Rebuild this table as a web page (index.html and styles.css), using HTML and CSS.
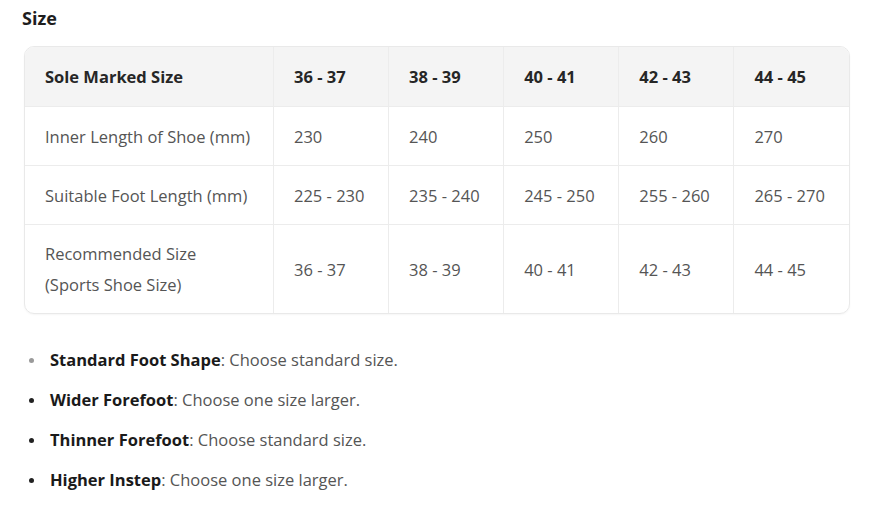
FILE: index.html
```html
<!DOCTYPE html>
<html>
<head>
<meta charset="utf-8">
<link rel="stylesheet" href="styles.css">
</head>
<body>
<div class="page">
  <h2 class="title">Size</h2>
  <div class="table-wrap">
    <table class="size-table">
      <thead>
        <tr>
          <th class="first">Sole Marked Size</th>
          <th>36 - 37</th>
          <th>38 - 39</th>
          <th>40 - 41</th>
          <th>42 - 43</th>
          <th>44 - 45</th>
        </tr>
      </thead>
      <tbody>
        <tr>
          <td class="first">Inner Length of Shoe (mm)</td>
          <td>230</td><td>240</td><td>250</td><td>260</td><td>270</td>
        </tr>
        <tr>
          <td class="first">Suitable Foot Length (mm)</td>
          <td>225 - 230</td><td>235 - 240</td><td>245 - 250</td><td>255 - 260</td><td>265 - 270</td>
        </tr>
        <tr class="tall">
          <td class="first">Recommended Size<br>(Sports Shoe Size)</td>
          <td>36 - 37</td><td>38 - 39</td><td>40 - 41</td><td>42 - 43</td><td>44 - 45</td>
        </tr>
      </tbody>
    </table>
  </div>
  <ul class="tips">
    <li class="faint"><b>Standard Foot Shape</b>: Choose standard size.</li>
    <li><b>Wider Forefoot</b>: Choose one size larger.</li>
    <li><b>Thinner Forefoot</b>: Choose standard size.</li>
    <li><b>Higher Instep</b>: Choose one size larger.</li>
  </ul>
</div>
</body>
</html>
```

FILE: styles.css
```css
html, body {
  margin: 0;
  padding: 0;
  background: #ffffff;
}
.page {
  font-family: "Open Sans", "Noto Sans", sans-serif;
  padding: 6px 0 0 22px;
  width: 827px;
}
.title {
  margin: 0 0 16px 0;
  font-size: 18px;
  font-weight: 700;
  color: #1e1e1e;
  line-height: 24px;
}
.table-wrap {
  margin-left: 2px;
  width: 824px;
  border: 1px solid #e9e9e9;
  border-radius: 10px;
  overflow: hidden;
  box-shadow: 0 1px 2px rgba(0,0,0,0.04);
}
.size-table {
  width: 100%;
  border-collapse: collapse;
  table-layout: fixed;
}
.size-table th, .size-table td {
  text-align: left;
  padding: 0 0 0 20px;
  font-size: 16.5px;
  border-left: 1px solid #ececec;
  border-top: 1px solid #ececec;
}
.size-table th.first, .size-table td.first {
  width: 228px;
  border-left: none;
}
.size-table thead th {
  border-top: none;
  background: #f4f4f4;
  color: #262626;
  font-weight: 700;
  height: 59px;
}
.size-table td {
  color: #555555;
  height: 58px;
}
.size-table tr.tall td {
  height: 88px;
  line-height: 31px;
}
.tips {
  margin: 36px 0 0 0;
  padding: 0 0 0 28px;
  list-style: none;
}
.tips li {
  position: relative;
  font-size: 16.5px;
  line-height: 20px;
  color: #555555;
  margin-bottom: 20px;
}
.tips li::before {
  content: "";
  position: absolute;
  left: -21px;
  top: 8px;
  width: 5px;
  height: 5px;
  border-radius: 50%;
  background: #222;
}
.tips li.faint::before {
  background: #9a9a9a;
}
.tips b {
  color: #1a1a1a;
  font-weight: 700;
}
```
